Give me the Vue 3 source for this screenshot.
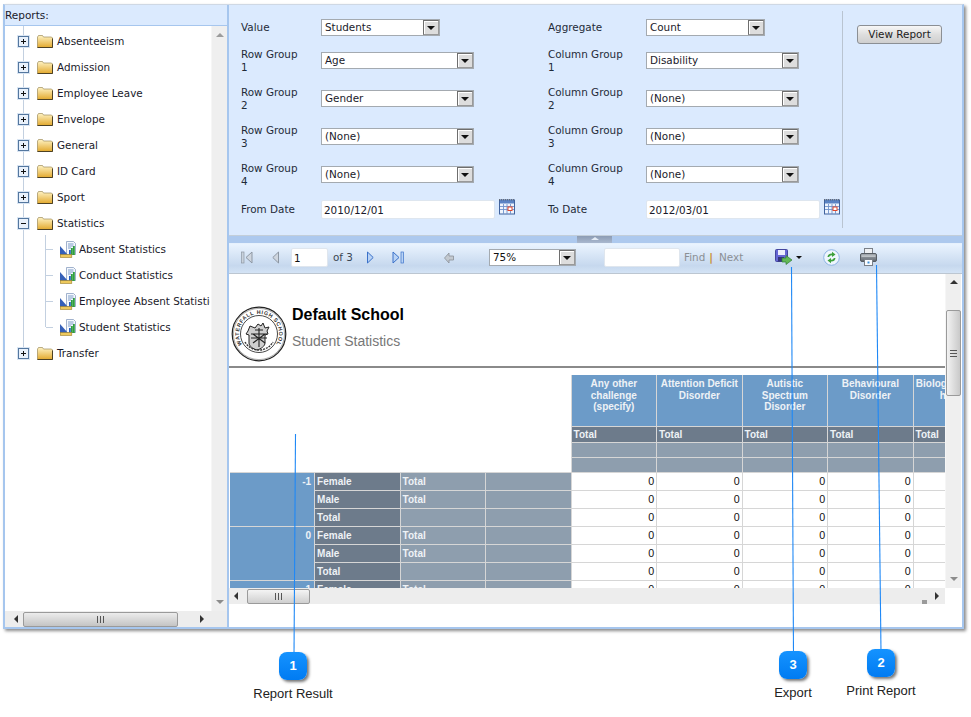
<script setup>
const folders1 = ['Absenteeism','Admission','Employee Leave','Envelope','General','ID Card','Sport']
const children = ['Absent Statistics','Conduct Statistics','Employee Absent Statistics','Student Statistics']
const formRows = [
  { l1:'Value', s1:'Students', w1:'short', l2:'Aggregate', s2:'Count', w2:'short' },
  { l1:'Row Group 1', s1:'Age', l2:'Column Group 1', s2:'Disability' },
  { l1:'Row Group 2', s1:'Gender', l2:'Column Group 2', s2:'(None)' },
  { l1:'Row Group 3', s1:'(None)', l2:'Column Group 3', s2:'(None)' },
  { l1:'Row Group 4', s1:'(None)', l2:'Column Group 4', s2:'(None)' },
]
const heads = ['Any other challenge (specify)','Attention Deficit Disorder','Autistic Spectrum Disorder','Behavioural Disorder','Biological health hazard']
const ages = ['-1','0','1']
const rows = [
  { g:'Female', t:'Total' },
  { g:'Male', t:'Total' },
  { g:'Total', t:'' },
]
const calls = [
  { n:1, cls:'c1', label:'Report Result' },
  { n:3, cls:'c3', label:'Export' },
  { n:2, cls:'c2', label:'Print Report' },
]
</script>

<template>
  <div class="page">
    <svg class="defs" width="0" height="0" aria-hidden="true">
      <defs>
        <linearGradient id="fold" x1="0" y1="0" x2="0" y2="1">
          <stop offset="0" stop-color="#fff3c4"/><stop offset="1" stop-color="#e2a92e"/>
        </linearGradient>
        <linearGradient id="prn" x1="0" y1="0" x2="0" y2="1">
          <stop offset="0" stop-color="#a9aeb4"/><stop offset="1" stop-color="#5f666e"/>
        </linearGradient>
        <symbol id="folder" viewBox="0 0 16 13">
          <path d="M.5 12.5V2L1.500.5h4l1 1.500h8l1 1v9.500z" fill="url(#fold)" stroke="#8f7a45" stroke-width=".6"/>
          <path d="M.5 12.500h15V3.500" fill="none" stroke="#4d4124" stroke-width="1"/>
        </symbol>
        <symbol id="report" viewBox="0 0 16 17">
          <path d="M6.500.5h7l2 2v11h-9z" fill="#f4f8fd" stroke="#8a9fc0" stroke-width=".8"/>
          <path d="M8 3h5.500M8 5h5.500M8 7h3" stroke="#7f9cc8" stroke-width="1"/>
          <path d="M0 14V5l8 9z" fill="#3560b8"/>
          <rect x="9" y="9" width="1.800" height="5" fill="#2a5fc0"/><rect x="11" y="7" width="1.800" height="7" fill="#2f9e3f"/><rect x="13" y="5" width="1.800" height="9" fill="#2f9e3f"/>
          <rect x=".3" y="13.500" width="11.500" height="3" fill="#eec95c" stroke="#9b7f2c" stroke-width=".6"/>
        </symbol>
        <symbol id="cal" viewBox="0 0 16 16">
          <rect x=".5" y="1" width="15" height="14" fill="#eef4fd" stroke="#41639e"/>
          <rect x="1" y="1" width="14" height="3.500" fill="#5a83c4"/>
          <path d="M0 .8h16" stroke="#555" stroke-dasharray="1 1"/>
          <path d="M1 7.500h14M1 10.500h14M4.500 5v10M8 5v10M11.500 5v10" stroke="#6f93cc" stroke-width=".9"/>
          <rect x="9" y="8" width="4" height="3.500" fill="#fff" stroke="#e0452a"/>
        </symbol>
      </defs>
    </svg>

    <div class="window">
      <aside class="left">
        <div class="left-title">Reports:</div>
        <div class="left-main">
          <div class="tree-wrap">
            <div class="tree">
              <template v-for="f in folders1" :key="f">
                <div class="node">
                  <span class="toggle"><i class="h"></i><i class="v"></i></span>
                  <svg class="ficon" width="16" height="13"><use href="#folder"/></svg>
                  <span class="label">{{ f }}</span>
                </div>
              </template>
              <div class="node">
                <span class="toggle"><i class="h"></i></span>
                <svg class="ficon" width="16" height="13"><use href="#folder"/></svg>
                <span class="label">Statistics</span>
              </div>
              <div class="kids">
                <div v-for="c in children" :key="c" class="kid">
                  <svg class="ricon" width="16" height="17"><use href="#report"/></svg>
                  <span class="label">{{ c }}</span>
                </div>
              </div>
              <div class="node">
                <span class="toggle"><i class="h"></i><i class="v"></i></span>
                <svg class="ficon" width="16" height="13"><use href="#folder"/></svg>
                <span class="label">Transfer</span>
              </div>
            </div>
            <div class="vbar">
              <i class="tri up"></i>
              <i class="tri down"></i>
            </div>
          </div>
          <div class="hbar left-h">
            <i class="tri lf"></i>
            <div class="thumb lt"><b></b></div>
            <i class="tri rt"></i>
          </div>
        </div>
      </aside>

      <section class="right">
        <div class="form">
          <div class="form-grid">
            <template v-for="r in formRows" :key="r.l1">
              <div class="flabel lab1">{{ r.l1 }}</div>
              <div class="sel" :class="r.w1">
                <span>{{ r.s1 }}</span><em><i></i></em>
              </div>
              <div class="flabel lab2">{{ r.l2 }}</div>
              <div class="sel" :class="r.w2">
                <span>{{ r.s2 }}</span><em><i></i></em>
              </div>
            </template>
            <div class="flabel lab1">From Date</div>
            <div class="datecell">
              <div class="date">2010/12/01</div>
              <svg class="calicon" width="16" height="16"><use href="#cal"/></svg>
            </div>
            <div class="flabel lab2">To Date</div>
            <div class="datecell">
              <div class="date">2012/03/01</div>
              <svg class="calicon" width="16" height="16"><use href="#cal"/></svg>
            </div>
          </div>
          <div class="form-btn">
            <div class="btn">View Report</div>
          </div>
        </div>

        <div class="splitter"><span class="grip"><i></i></span></div>

        <div class="toolbar">
          <svg class="t-first" width="12" height="13" viewBox="0 0 12 13"><rect x=".5" y="1" width="2.500" height="11" fill="#c9d2dc" stroke="#8d97a3" stroke-width=".7"/><path d="M11 1v11L5 6.500z" fill="#cfd6df" stroke="#8d97a3"/></svg>
          <svg class="t-prev" width="7" height="13" viewBox="0 0 7 13"><path d="M6.500 1v11L.8 6.500z" fill="#cfd6df" stroke="#8d97a3"/></svg>
          <div class="pageinput">1</div>
          <span class="of">of 3</span>
          <svg class="t-next" width="7" height="13" viewBox="0 0 7 13"><path d="M.5 1v11l5.700-5.500z" fill="#b9d3f5" stroke="#3a71c9"/></svg>
          <svg class="t-last" width="12" height="13" viewBox="0 0 12 13"><path d="M1 1v11l6-5.500z" fill="#b9d3f5" stroke="#3a71c9"/><rect x="9" y="1" width="2.500" height="11" fill="#b9d3f5" stroke="#3a71c9" stroke-width=".7"/></svg>
          <svg class="t-back" width="10" height="12" viewBox="0 0 10 12"><path d="M5 1v3h4.500v4H5v3L.5 6z" fill="#c3c9d0" stroke="#8a9098" stroke-width=".8"/></svg>
          <div class="sel zoomsel"><span>75%</span><em><i></i></em></div>
          <div class="findinput"></div>
          <span class="find">Find</span>
          <span class="pipe">|</span>
          <span class="find">Next</span>
          <svg class="t-save" width="18" height="16" viewBox="0 0 18 16">
            <rect x=".5" y=".5" width="12" height="12" rx="1" fill="#6666d4" stroke="#44469e"/>
            <rect x="3" y="1" width="7" height="5" fill="#eceefc"/>
            <rect x="3" y="8" width="6" height="4.500" fill="#34357a"/>
            <path d="M7 9h4V6.500l6 4.500-6 4.500V13H7z" fill="#62b856" stroke="#2f7d34" stroke-width=".7"/>
          </svg>
          <i class="savecaret"></i>
          <svg class="t-refresh" width="17" height="17" viewBox="0 0 17 17">
            <circle cx="8.500" cy="8.500" r="7.800" fill="#eef5fd" stroke="#8db3e4"/>
            <path d="M4.500 8c.3-2.500 2-3.700 4.500-3.500V2.800L12.500 5.500 9 8V6.200c-1.500 0-2.500.7-2.800 1.800z" fill="#3da03c"/>
            <path d="M12.500 9c-.3 2.500-2 3.700-4.500 3.500v1.700L4.500 11.500 8 9v1.800c1.500 0 2.500-.7 2.800-1.800z" fill="#3da03c"/>
          </svg>
          <svg class="t-print" width="17" height="18" viewBox="0 0 17 18">
            <rect x="4.500" y=".5" width="8" height="6" fill="#eef0f3" stroke="#7a8088"/>
            <rect x=".5" y="5.500" width="16" height="8" rx="1.500" fill="url(#prn)" stroke="#565c63"/>
            <rect x="1.500" y="7.500" width="14" height="1.200" fill="#d0d4d8"/>
            <rect x="4.500" y="11.500" width="8" height="6" fill="#fbfcfe" stroke="#7a8088"/>
            <rect x="7.500" y="13.500" width="2" height="2" fill="#3d8fd8"/>
          </svg>
        </div>

        <div class="report">
          <div class="report-view">
            <div class="report-scroll">
              <div class="rep-head">
                <svg class="seal" width="56" height="56" viewBox="0 0 56 56">
                  <defs><path id="sealArc" d="M18 45.300A20 20 0 1 1 38 45.300"/></defs>
                  <circle cx="28" cy="28" r="26.800" fill="#fff" stroke="#222" stroke-width="1.200"/>
                  <circle cx="28" cy="28" r="25.600" fill="none" stroke="#555" stroke-width=".5"/>
                  <circle cx="28" cy="28" r="18.500" fill="none" stroke="#333" stroke-width=".9"/>
                  <text class="sealtxt"><textPath href="#sealArc" startOffset="50%" text-anchor="middle">WATERFALL HIGH SCHOOL</textPath></text>
                  <path d="M19 20l5 2 3-4 3 2 2-3 2 5 4-1-2 4 1 3-3 1v8c0 3-4 6-8 7-4-1-8-4-8-7v-8l-3-1 2-3z" fill="#cfcfcf" stroke="#222" stroke-width="1"/>
                  <path d="M20 28h16M20 32h16M28 22v19M22 37l12-9M22 28l12 9M24 24h8" stroke="#222" stroke-width="1.100"/>
                  <path d="M14 36c3 5 8 8 14 8s11-3 14-8" fill="none" stroke="#333" stroke-width="1.400" stroke-dasharray="2 1"/>
                </svg>
                <div class="rep-titles">
                  <div class="rep-school">Default School</div>
                  <div class="rep-name">Student Statistics</div>
                </div>
              </div>
              <div class="matrix">
                <div class="corner"></div>
                <div v-for="h in heads" :key="h" class="ch">{{ h }}</div>
                <div v-for="h in heads" :key="h + 't'" class="ct">Total</div>
                <div v-for="h in heads" :key="h + 'a'" class="cg"></div>
                <div v-for="h in heads" :key="h + 'b'" class="cg"></div>
                <template v-for="a in ages" :key="a">
                  <div class="age">{{ a }}</div>
                  <template v-for="r in rows" :key="r.g">
                    <div class="gen">{{ r.g }}</div>
                    <div class="tot">{{ r.t }}</div>
                    <div class="tot"></div>
                    <div v-for="n in 5" :key="n" class="val">0</div>
                  </template>
                </template>
              </div>
            </div>
            <div class="vbar rep-v">
              <i class="tri up dark"></i>
              <div class="thumb vt"><b></b></div>
              <i class="tri down"></i>
            </div>
          </div>
          <div class="hbar rep-h">
            <i class="tri lf"></i>
            <div class="thumb rt-thumb"><b></b></div>
            <i class="stub"></i>
            <i class="tri rt"></i>
          </div>
        </div>
      </section>
    </div>

    <svg class="lines" width="971" height="717" viewBox="0 0 971 717">
      <path d="M295.500 434L294 655" class="ln"/>
      <path d="M791.500 267L793.500 655" class="ln"/>
      <path d="M876.500 265L881 652" class="ln"/>
    </svg>
    <div v-for="c in calls" :key="c.n" class="callout" :class="c.cls">
      <div class="badge">{{ c.n }}</div>
      <div class="clabel">{{ c.label }}</div>
    </div>
  </div>
</template>

<style>
html, body { margin: 0; background: #fff; }
</style>

<style scoped>
.page {
  position: relative;
  width: 971px;
  height: 717px;
  padding: 4px 0 0 3px;
  box-sizing: border-box;
  background: #fff;
  overflow: hidden;
  font: 10.400px/13px "DejaVu Sans", "Noto Sans", sans-serif;
  color: #1a1a2a;
}
.defs { position: absolute; }
.window {
  width: 961px;
  height: 625px;
  box-sizing: border-box;
  display: flex;
  border: 2px solid #a6c6ee;
  border-top-color: #cfd8e4;
  border-top-width: 1px;
  box-shadow: 2px 2px 3px #8a8a8a;
  background: #fff;
}
/* left pane */
.left {
  width: 222px;
  flex: none;
  display: flex;
  flex-direction: column;
  border-right: 2px solid #a6c6ee;
}
.left-title {
  height: 20px;
  line-height: 21px;
  background: #dbeafe;
  border-bottom: 1px solid #a6c6ee;
  flex: none;
  font-size: 10.500px;
}
.left-main { flex: 1; display: flex; flex-direction: column; min-height: 0; }
.tree-wrap { flex: 1; display: flex; min-height: 0; }
.tree {
  position: relative;
  flex: 1;
  min-width: 0;
  padding-top: 2px;
  overflow: hidden;
}
.tree::before {
  content: "";
  position: absolute;
  left: 18px;
  top: 0;
  height: 326px;
  border-left: 1px solid #c3d0e0;
}
.node {
  position: relative;
  height: 26px;
  display: flex;
  align-items: center;
}
.toggle {
  position: relative;
  width: 11px;
  height: 11px;
  margin-left: 13px;
  box-sizing: border-box;
  border: 1px solid #54779f;
  background: #e9f1fb;
  outline: 1px solid #d9e5f3;
}
.toggle .h { position: absolute; left: 2px; top: 4px; width: 5px; height: 1px; background: #111; }
.toggle .v { position: absolute; left: 4px; top: 2px; width: 1px; height: 5px; background: #111; }
.ficon { margin-left: 8px; flex: none; }
.label { margin-left: 4px; white-space: nowrap; }
.kids { position: relative; }
.kids::before {
  content: "";
  position: absolute;
  left: 40px;
  top: -1px;
  height: 92px;
  border-left: 1px solid #c3d0e0;
}
.kid {
  position: relative;
  height: 26px;
  display: flex;
  align-items: center;
  padding: 0 1px 0 55px;
}
.kid::before {
  content: "";
  position: absolute;
  left: 41px;
  top: 13px;
  width: 7px;
  border-top: 1px solid #c3d0e0;
}
.ricon { flex: none; }
.kid .label { margin-left: 3px; min-width: 0; overflow: hidden; }

.vbar {
  width: 16px;
  flex: none;
  background: #efefef;
  border-left: 1px solid #f6f6f6;
  display: flex;
  flex-direction: column;
  align-items: center;
  justify-content: space-between;
  padding: 7px 0;
  box-sizing: border-box;
}
.hbar {
  height: 16px;
  flex: none;
  background: #ededed;
  display: flex;
  align-items: center;
  box-sizing: border-box;
}
.left-h { padding: 0 19px 0 9px; }
.tri { display: block; width: 0; height: 0; border-style: solid; border-color: transparent; flex: none; }
.tri.up { border-width: 0 4px 4px; border-bottom-color: #9c9c9c; }
.tri.up.dark { border-bottom-color: #333; }
.tri.down { border-width: 4px 4px 0; border-top-color: #8c8c8c; }
.tri.lf { border-width: 4px 4px 4px 0; border-right-color: #333; }
.tri.rt { border-width: 4px 0 4px 4px; border-left-color: #333; }
.thumb {
  box-sizing: border-box;
  border: 1px solid #9a9a9a;
  border-radius: 2px;
  background: linear-gradient(#f4f4f4, #cfcfcf);
  display: flex;
  align-items: center;
  justify-content: center;
}
.thumb b { display: block; width: 7px; height: 7px; background: repeating-linear-gradient(90deg, #555 0 1px, transparent 1px 3px); }
.lt { width: 155px; height: 15px; margin: 0 5px; flex: none; background: linear-gradient(#ececec, #c4c4c4); }
.left-h .tri.rt { margin-left: 17px; }
.rt-thumb { width: 63px; height: 15px; margin-left: 9px; flex: none; }
.vt { width: 15px; height: 86px; flex: none; flex-direction: column; background: linear-gradient(90deg, #f2f2f2, #c9c9c9); }
.vt b { width: 7px; height: 7px; background: repeating-linear-gradient(#555 0 1px, transparent 1px 3px); }

/* right pane */
.right { flex: 1; min-width: 0; display: flex; flex-direction: column; }
.form {
  height: 231px;
  flex: none;
  box-sizing: border-box;
  background: #dbeafe;
  border-bottom: 1px solid #c3ced9;
  display: flex;
  padding: 6px 0 0 12px;
}
.form-grid {
  display: grid;
  grid-template-columns: 80px 227px 98px 196px;
  grid-template-rows: 28px 38px 38px 38px 38px 32px;
  align-items: center;
  width: 601px;
  height: 215px;
  padding-top: 2px;
  border-right: 1px solid #b9c4d1;
  align-content: start;
}
.flabel { line-height: 13px; color: #1f2a38; padding-top: 1px; }
.lab1 { width: 66px; }
.lab2 { width: 84px; }
.sel {
  box-sizing: border-box;
  position: relative;
  width: 153px;
  height: 17px;
  background: #fff;
  border: 1px solid #a4aab0;
  padding-left: 3px;
  line-height: 15px;
  white-space: nowrap;
}
.sel.short { width: 119px; }
.sel em {
  position: absolute;
  right: 0;
  top: 0;
  bottom: 0;
  width: 16px;
  box-sizing: border-box;
  background: #dddddd;
  border: 1px solid #6e6e6e;
  border-right-color: #999;
  border-bottom-color: #999;
  box-shadow: inset 1px 1px 0 #fff;
}
.sel em i {
  position: absolute;
  left: 3px;
  top: 5px;
  width: 0;
  height: 0;
  border-style: solid;
  border-width: 4px 4px 0;
  border-color: #111 transparent transparent;
}
.datecell { display: flex; align-items: flex-start; gap: 4px; }
.date {
  box-sizing: border-box;
  width: 174px;
  height: 19px;
  background: #fff;
  border: 1px solid #dee6ef;
  border-radius: 2px;
  line-height: 18px;
  padding-left: 2px;
}
.calicon { margin-top: -1px; }
.form-btn { flex: 1; padding: 14px 0 0 14px; }
.btn {
  box-sizing: border-box;
  width: 85px;
  height: 19px;
  line-height: 17px;
  text-align: center;
  border: 1px solid #8b8f94;
  border-radius: 3px;
  background: linear-gradient(#f7f7f7, #dedede 50%, #cfcfcf);
  color: #222;
}
.splitter {
  height: 7px;
  flex: none;
  background: #adc9ee;
  position: relative;
}
.grip {
  position: absolute;
  left: 348px;
  top: 0;
  width: 35px;
  height: 7px;
  background: linear-gradient(#8c9cb4, #a9b8cf);
  display: flex;
  justify-content: center;
}
.grip i { width: 0; height: 0; margin-top: 1px; border-style: solid; border-width: 0 4px 3px; border-color: transparent transparent #e4ecf6; }

.toolbar {
  height: 31px;
  flex: none;
  box-sizing: border-box;
  display: flex;
  align-items: center;
  padding-bottom: 2px;
  background: linear-gradient(#eaf4ff, #d7e5f6 40%, #c6d8ee 75%, #d4e3f5);
  border-bottom: 1px solid #bcc6d1;
  border-top: 1px solid #e6f1fd;
  color: #3a4552;
}
.t-first { margin-left: 12px; flex: none; }
.t-prev { margin-left: 19px; flex: none; }
.pageinput {
  box-sizing: border-box;
  width: 37px;
  height: 19px;
  margin-left: 12px;
  background: #fff;
  border: 1px solid #dfe6ee;
  border-radius: 2px;
  line-height: 18px;
  padding-left: 2px;
  color: #111;
  flex: none;
}
.of { margin-left: 5px; width: 21px; flex: none; }
.t-next { margin-left: 13px; flex: none; }
.t-last { margin-left: 18px; flex: none; }
.t-back { margin-left: 40px; flex: none; }
.zoomsel { width: 87px; margin-left: 35px; flex: none; color: #111; }
.findinput {
  box-sizing: border-box;
  width: 76px;
  height: 19px;
  margin-left: 28px;
  background: #fff;
  border: 1px solid #dfe6ee;
  border-radius: 2px;
  flex: none;
}
.find { color: #8b8f94; margin-left: 4px; flex: none; }
.pipe { color: #c98a2e; margin-left: 4px; flex: none; font-weight: 700; margin-right: 2px; }
.t-save { margin: 0 0 2px 32px; flex: none; }
.savecaret { margin-left: 3px; width: 0; height: 0; border-style: solid; border-width: 3px 3px 0; border-color: #111 transparent transparent; flex: none; }
.t-refresh { margin-left: 21px; flex: none; }
.t-print { margin: 0 0 2px 20px; flex: none; }

.report { flex: 1; min-height: 0; display: flex; flex-direction: column; background: #fff; }
.report-view { height: 314px; flex: none; display: flex; }
.report-scroll { width: 716px; flex: none; overflow: hidden; }
.rep-head {
  box-sizing: border-box;
  height: 94px;
  border-bottom: 2px solid #8a8a8a;
  display: flex;
  padding: 32px 0 0 2px;
}
.seal { flex: none; }
.sealtxt { font: 700 5.400px "Liberation Sans", sans-serif; letter-spacing: .6px; fill: #333; }
.rep-titles { margin-left: 5px; font-family: "Liberation Sans", sans-serif; }
.rep-school { font-size: 16px; font-weight: 700; color: #000; line-height: 18px; }
.rep-name { font-size: 14px; color: #777; line-height: 16px; margin-top: 9px; }
.matrix {
  display: grid;
  grid-template-columns: repeat(9, 84.500px);
  grid-template-rows: 51px 15px 14px 14px repeat(9, 17px);
  gap: 1px;
  width: 770px;
  margin: 7px 0 0 .6px;
  background: #d6d6d6;
  font: 700 10px/11.500px "Liberation Sans", sans-serif;
  color: #eef2f6;
}
.corner { grid-column: 1 / 5; grid-row: 1 / 5; background: #fff; margin: -1px 0 0 -1px; }
.ch { background: #6c9bc8; text-align: center; padding: 3px 0 0; }
.ct { background: #6d7b8b; line-height: 15px; padding-left: 2px; }
.cg { background: #8e9eae; }
.age { grid-row: span 3; grid-column: 1; background: #6c9bc8; text-align: right; padding: 2px 3px 0 0; line-height: 14px; }
.gen { background: #6d7b8b; line-height: 17px; padding-left: 2px; }
.tot { background: #8e9eae; line-height: 17px; padding-left: 2px; }
.val { background: #fff; color: #111; font-weight: 400; font-size: 10.700px; text-align: right; line-height: 16px; padding-right: 2px; }
.rep-v { justify-content: flex-start; padding: 6px 0; height: 314px; }
.rep-v .vt { margin-top: 26px; }
.rep-v .tri.down { margin-top: auto; margin-bottom: 1px; }
.rep-h { padding-left: 5px; width: 716px; }
.stub { width: 5px; height: 16px; margin-left: 612px; background: linear-gradient(#ededed 75%, #9a9a9a 75%); flex: none; }
.rep-h .tri.rt { margin-left: 8px; }

/* annotation overlay */
.lines { position: absolute; left: 0; top: 0; pointer-events: none; }
.ln { stroke: #1f88f6; stroke-width: 1.100; fill: none; }
.callout {
  position: absolute;
  width: 120px;
  display: flex;
  flex-direction: column;
  align-items: center;
}
.c1 { left: 233px; top: 652px; }
.c3 { left: 733px; top: 651px; }
.c2 { left: 821px; top: 649px; }
.badge {
  box-sizing: border-box;
  width: 28px;
  height: 28px;
  border-radius: 8px;
  background: linear-gradient(#1593ff, #007bf2);
  color: #fff;
  font: 700 13px/28px "Liberation Sans", sans-serif;
  text-align: center;
  box-shadow: 2px 2px 3px #777;
}
.clabel { margin-top: 7px; font: 13px/14px "Liberation Sans", sans-serif; color: #222; white-space: nowrap; }
</style>
